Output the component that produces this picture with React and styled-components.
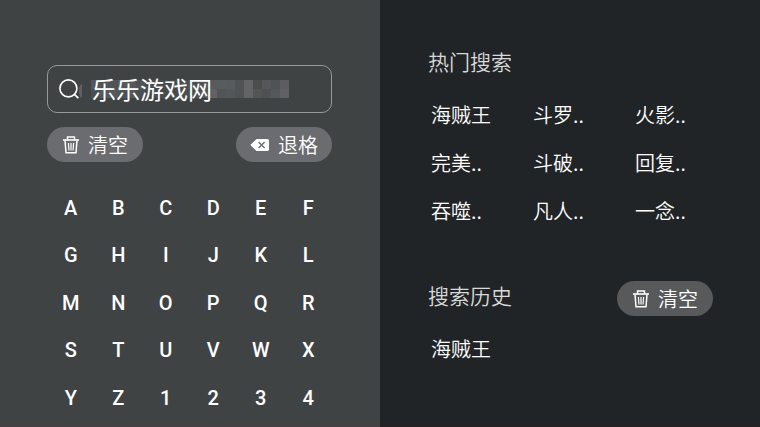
import React, { useState } from 'react';
import styled, { createGlobalStyle } from 'styled-components';

const KEYS = 'ABCDEFGHIJKLMNOPQRSTUVWXYZ1234'.split('');

const HOT = [
  '海贼王',
  '斗罗..',
  '火影..',
  '完美..',
  '斗破..',
  '回复..',
  '吞噬..',
  '凡人..',
  '一念..',
];

const CELL = 9;

// grey level of every mosaic cell, two rows
const MOSAIC = [
  [
    '#54575a', '#505355', '#505355', '#56595b', '#56595b', '#505355', '#484b4d',
    '#484b4d', '#484b4d', '#484b4d', '#4c4f51', '#4c4f51', '#505355', '#585b5c',
    '#595c5d', '#585b5c', '#505354', '#626466', '#4a4d4e', '#55585a', '#505355',
    '#5c5d5f',
  ],
  [
    '#4c4f51', '#56595b', '#56595b', '#505355', '#54575a', '#4c4f51', '#484b4d',
    '#484b4d', '#484b4d', '#484b4d', '#4c4f51', '#4c4f51', '#505355', '#606264',
    '#525557', '#54575a', '#505354', '#626466', '#525456', '#4e5153', '#55585a',
    '#606164',
  ],
];

const TrashIcon = () => (
  <svg width="18" height="18" viewBox="0 0 18 18" fill="none" stroke="#fff" aria-hidden="true">
    <path d="M1 4h16" strokeWidth="1.6" />
    <path d="M5.5 4V1h7v3" strokeWidth="1.4" />
    <path d="M3 4.5l1 12.3h10l1-12.3" strokeWidth="1.5" />
    <path d="M6.4 7l.6 7.5M9 7v7.5M11.6 7l-.6 7.5" strokeWidth="1.2" />
  </svg>
);

const BackspaceIcon = () => (
  <svg width="20" height="18" viewBox="0 0 20 18" aria-hidden="true">
    <path
      d="M6.600 3h10.600c1 0 1.800.8 1.800 1.800v8.400c0 1-.8 1.800-1.800 1.800H6.600L.8 9.600a.9.9 0 0 1 0-1.200z"
      fill="#fff"
    />
    <path d="M8.600 6l6 6M14.600 6l-6 6" stroke="#6b6c6f" strokeWidth="1.4" />
  </svg>
);

const SearchIcon = () => (
  <svg width="20" height="20" viewBox="0 0 20 20" fill="none" stroke="#fff" aria-hidden="true">
    <circle cx="9.4" cy="9.4" r="8.5" strokeWidth="1.6" />
    <path d="M15.4 15.4l4 3.8" strokeWidth="1.8" />
  </svg>
);

function App() {
  const [query, setQuery] = useState('乐乐游戏网');
  const [history, setHistory] = useState(['海贼王']);

  return (
    <>
      <GlobalStyle />
      <Screen>
        <KeyboardPanel>
          <SearchBox>
            <SearchIcon />
            <Mosaic width="210" height="18" viewBox="0 0 210 18" aria-hidden="true">
              <path d="M3 4v14q-3-1-3-7t3-7z" fill="#5f6264" />
              {MOSAIC.map((row, y) =>
                row.map((fill, x) => (
                  <rect
                    key={`${x}-${y}`}
                    x={12 + x * CELL}
                    y={y * CELL}
                    width={CELL}
                    height={CELL}
                    fill={fill}
                  />
                ))
              )}
            </Mosaic>
            <SearchInput
              type="text"
              aria-label="搜索"
              value={query}
              onChange={(event) => setQuery(event.target.value)}
            />
          </SearchBox>
          <Actions>
            <PillButton type="button" onClick={() => setQuery('')}>
              <TrashIcon />
              清空
            </PillButton>
            <PillButton type="button" onClick={() => setQuery(query.slice(0, -1))}>
              <BackspaceIcon />
              退格
            </PillButton>
          </Actions>
          <KeyGrid>
            {KEYS.map((key) => (
              <Key key={key} type="button" onClick={() => setQuery(query + key)}>
                {key}
              </Key>
            ))}
          </KeyGrid>
        </KeyboardPanel>
        <ResultPanel>
          <SectionHeader>
            <Title>热门搜索</Title>
          </SectionHeader>
          <WordGrid>
            {HOT.map((word) => (
              <Word key={word} type="button" onClick={() => setQuery(word)}>
                {word}
              </Word>
            ))}
          </WordGrid>
          <SectionHeader $spaced>
            <Title>搜索历史</Title>
            <PillButton $dark type="button" onClick={() => setHistory([])}>
              <TrashIcon />
              清空
            </PillButton>
          </SectionHeader>
          <WordGrid>
            {history.map((word) => (
              <Word key={word} type="button" onClick={() => setQuery(word)}>
                {word}
              </Word>
            ))}
          </WordGrid>
        </ResultPanel>
      </Screen>
    </>
  );
}

const GlobalStyle = createGlobalStyle`
  * {
    box-sizing: border-box;
  }

  body {
    margin: 0;
    background: #212426;
    color: #fff;
    font-family: 'Noto Sans CJK SC', sans-serif;
  }

  button,
  input {
    margin: 0;
    padding: 0;
    border: none;
    background: none;
    color: inherit;
    font-family: inherit;
  }

  button {
    cursor: pointer;
  }
`;

const Screen = styled.main`
  display: grid;
  grid-template-columns: repeat(2, minmax(0, 1fr));
  min-height: 100vh;
`;

const KeyboardPanel = styled.section`
  padding: 65px 48px 0 47px;
  border-bottom: 1px solid #4a4044;
  background: #404344;
`;

const SearchBox = styled.div`
  position: relative;
  display: flex;
  align-items: center;
  gap: 13px;
  height: 48px;
  padding: 0 11px;
  border: 1px solid #98999b;
  border-radius: 10px;
`;

const Mosaic = styled.svg`
  position: absolute;
  left: 31px;
  top: 14px;
`;

const SearchInput = styled.input`
  position: relative;
  flex: 1;
  min-width: 0;
  height: 36px;
  padding-bottom: 2px;
  font-size: 24px;
  outline: none;
`;

const Actions = styled.div`
  display: flex;
  justify-content: space-between;
  margin-top: 14px;
`;

const PillButton = styled.button`
  display: flex;
  align-items: center;
  justify-content: center;
  gap: 8px;
  width: 96px;
  height: 35px;
  border-radius: 18px;
  background: ${({ $dark }) => ($dark ? '#58595a' : '#6b6c6f')};
  font-size: 20px;
  line-height: 35px;
  font-weight: 350;
`;

const KeyGrid = styled.div`
  display: grid;
  grid-template-columns: repeat(6, minmax(0, 1fr));
  margin-top: 22px;
`;

const Key = styled.button`
  aspect-ratio: 1;
  font-family: Roboto, sans-serif;
  font-size: 20px;
  font-weight: 500;
`;

const ResultPanel = styled.section`
  padding: 47px 47px 0 48px;
  border-bottom: 1px solid #2b2024;
  background: #212426;
`;

const SectionHeader = styled.header`
  display: flex;
  align-items: flex-start;
  justify-content: space-between;
  height: 35px;
  margin-top: ${({ $spaced }) => ($spaced ? '47px' : '0')};
`;

const Title = styled.h2`
  margin: 0;
  color: #d8d9d9;
  font-size: 21px;
  line-height: 28px;
  font-weight: 350;
`;

const WordGrid = styled.div`
  display: grid;
  grid-template-columns: repeat(3, minmax(0, 1fr));
  column-gap: 16px;
  grid-auto-rows: 48px;
  margin: 8px -8px 0 3px;
`;

const Word = styled.button`
  font-size: 20px;
  font-weight: 350;
  text-align: left;
`;

export default App;
